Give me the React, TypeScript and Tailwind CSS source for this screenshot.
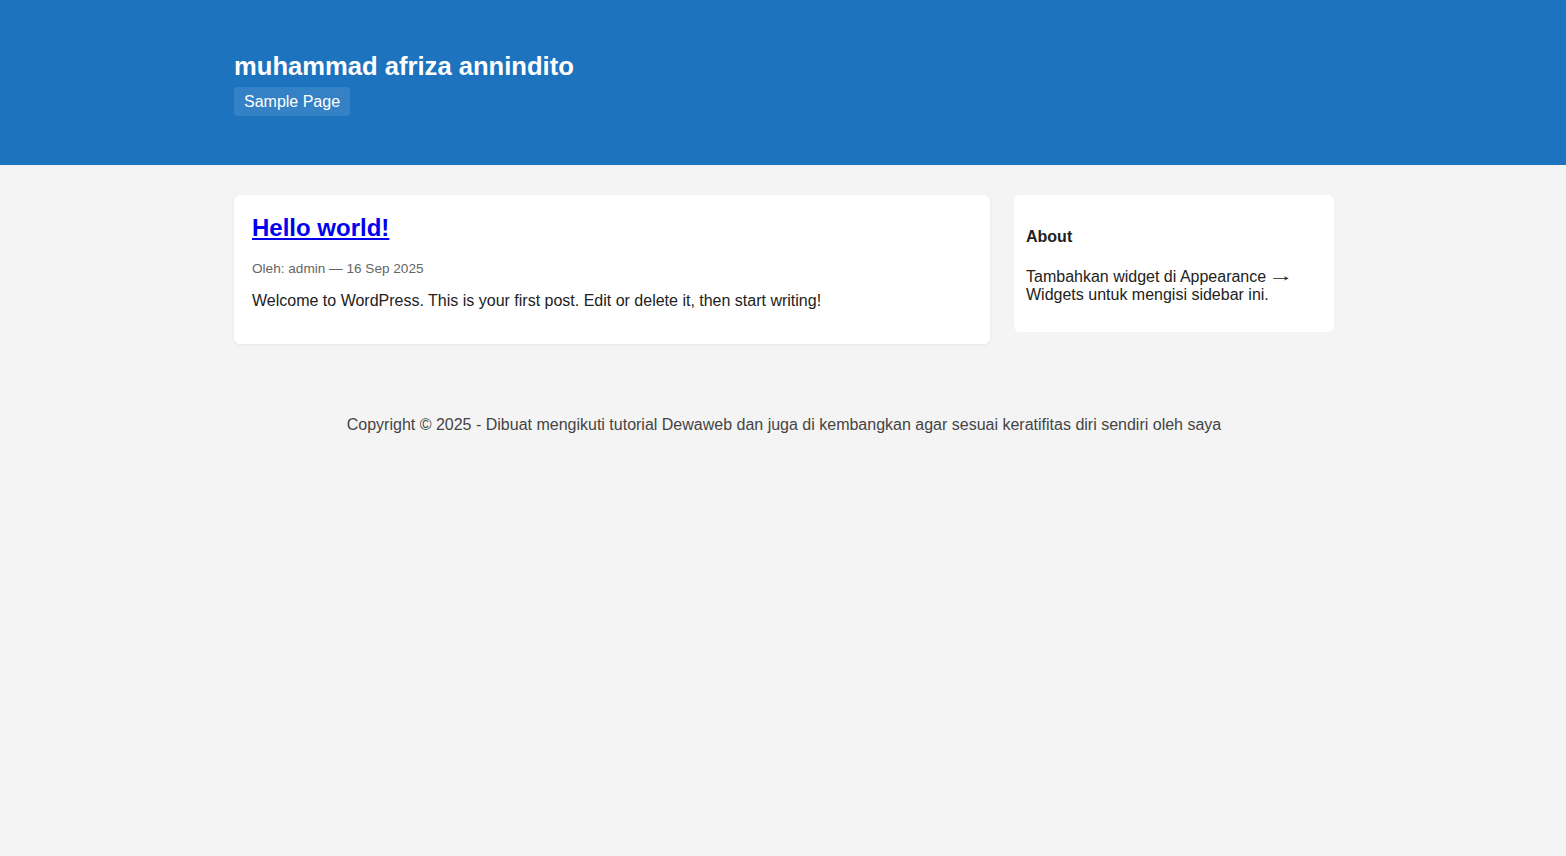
import React from "react";

export default function App() {
  return (
    <div className="min-h-[856px] bg-[#f4f4f4] pl-[2px] font-['Liberation_Sans',Arial,sans-serif] text-[#222]">
      <header className="-ml-[2px] h-[165px] bg-[#1e73be] pl-[2px] text-white">
        <div className="mx-auto w-[1100px] pt-[51px]">
          <div className="text-[25.6px] font-bold leading-[30px]">muhammad afriza annindito</div>
          <nav className="mt-[6px] flex">
            <a className="rounded-[4px] bg-white/10 px-[10px] py-[5px] text-[16px] leading-[19px] text-white">
              Sample Page
            </a>
          </nav>
        </div>
      </header>
      <main className="mx-auto mt-[30px] flex w-[1100px] items-start gap-[24px]">
        <article className="w-[756px] rounded-[6px] bg-white p-[18px] shadow-[0_1px_3px_rgba(0,0,0,0.06)]">
          <h2 className="pt-[1px] text-[24px] font-bold leading-[28px]">
            <a href="#" className="text-[#0000ee] underline">Hello world!</a>
          </h2>
          <div className="mt-[19px] text-[13.6px] leading-[16px] text-[#666]">Oleh: admin — 16 Sep 2025</div>
          <p className="mt-[15px] mb-[16px] text-[16px] leading-[18px] text-[#222]">
            Welcome to WordPress. This is your first post. Edit or delete it, then start writing!
          </p>
        </article>
        <aside className="w-[320px] rounded-[6px] bg-white px-[12px] pt-[12px] pb-[12px]">
          <h3 className="mt-[21px] text-[16px] font-bold leading-[18px] text-[#222]">About</h3>
          <p className="mt-[22px] mb-[16px] text-[16px] leading-[18px] text-[#222]">
            Tambahkan widget di Appearance{" "}
            <span className="mx-[2px] inline-block -translate-y-[1px] scale-x-[1.6]">→</span> Widgets untuk mengisi sidebar ini.
          </p>
        </aside>
      </main>
      <footer className="mt-[72px] text-center text-[16px] leading-[18px] text-[#444]">
        Copyright © 2025 - Dibuat mengikuti tutorial Dewaweb dan juga di kembangkan agar sesuai keratifitas diri sendiri oleh saya
      </footer>
    </div>
  );
}
